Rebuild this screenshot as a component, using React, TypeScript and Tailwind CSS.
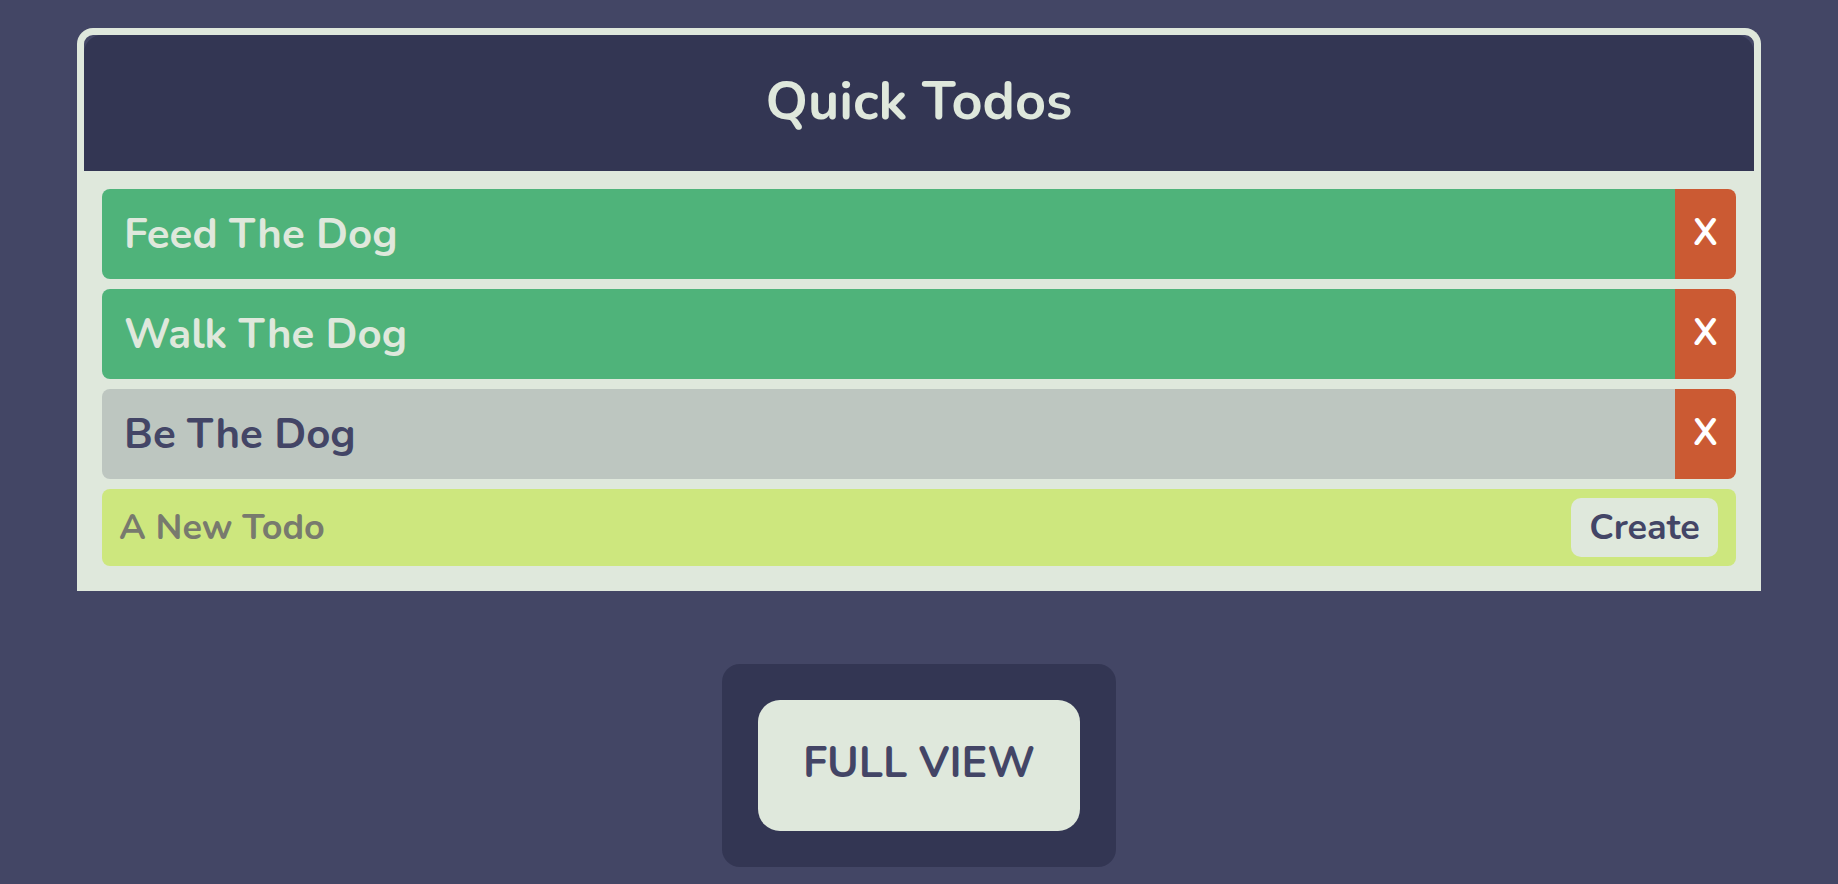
import { useState } from 'react'

type Todo = { id: number; text: string; done: boolean }

const initialTodos: Todo[] = [
  { id: 1, text: 'Feed The Dog', done: false },
  { id: 2, text: 'Walk The Dog', done: false },
  { id: 3, text: 'Be The Dog', done: true },
]

function TodoRow({ todo, onRemove }: { todo: Todo; onRemove: () => void }) {
  return (
    <div className="flex h-[90px] overflow-hidden rounded-[8px]">
      <div
        className={
          todo.done
            ? 'flex flex-1 items-center bg-[#bdc6c0] pl-[22px] text-[42px] font-bold text-[#434566]'
            : 'flex flex-1 items-center bg-[#4fb37a] pl-[22px] text-[42px] font-bold text-[#dfe8dc]'
        }
      >
        {todo.text}
      </div>
      <button
        onClick={onRemove}
        className="flex w-[61px] items-center justify-center bg-[#cb5a33] text-[37px] font-bold text-white"
      >
        X
      </button>
    </div>
  )
}

function App() {
  const [todos, setTodos] = useState(initialTodos)
  const [draft, setDraft] = useState('')

  return (
    <div className="h-screen overflow-hidden bg-[#434665] pt-[28px] font-['Nunito','Lato',sans-serif]">
      {/* Quick todos card */}
      <div className="mx-auto w-[1684px] rounded-t-[16px] border-[7px] border-b-0 border-[#dfe8dc] bg-[#434665]">
        <header className="flex h-[136px] items-center justify-center rounded-t-[18px] bg-[#333653] pb-[3px]">
          <h1 className="text-[54px] font-bold text-[#dfe8dc]">Quick Todos</h1>
        </header>

        <div className="flex flex-col gap-[10px] bg-[#dfe8dc] px-[18px] pt-[18px] pb-[25px]">
          {todos.map((t) => (
            <TodoRow key={t.id} todo={t} onRemove={() => setTodos(todos.filter((x) => x.id !== t.id))} />
          ))}

          <div className="flex h-[77px] items-center rounded-[8px] bg-[#cde77e] pr-[18px] pl-[17px]">
            <input
              value={draft}
              onChange={(e) => setDraft(e.target.value)}
              placeholder="A New Todo"
              className="min-w-0 flex-1 bg-transparent text-[36px] font-bold text-[#434566] outline-none placeholder:text-[#787a6e]"
            />
            <button className="h-[59px] w-[147px] rounded-[10px] bg-[#dfe8dc] text-[36px] font-bold text-[#434566]">
              Create
            </button>
          </div>
        </div>
      </div>

      {/* Full view */}
      <div className="mx-auto mt-[73px] w-[394px] rounded-[18px] bg-[#333653] p-[36px]">
        <button className="h-[131px] w-full rounded-[22px] bg-[#dfe8dc] pb-[4px] text-[43px] font-bold text-[#434566]">
          FULL VIEW
        </button>
      </div>
    </div>
  )
}

export default App
